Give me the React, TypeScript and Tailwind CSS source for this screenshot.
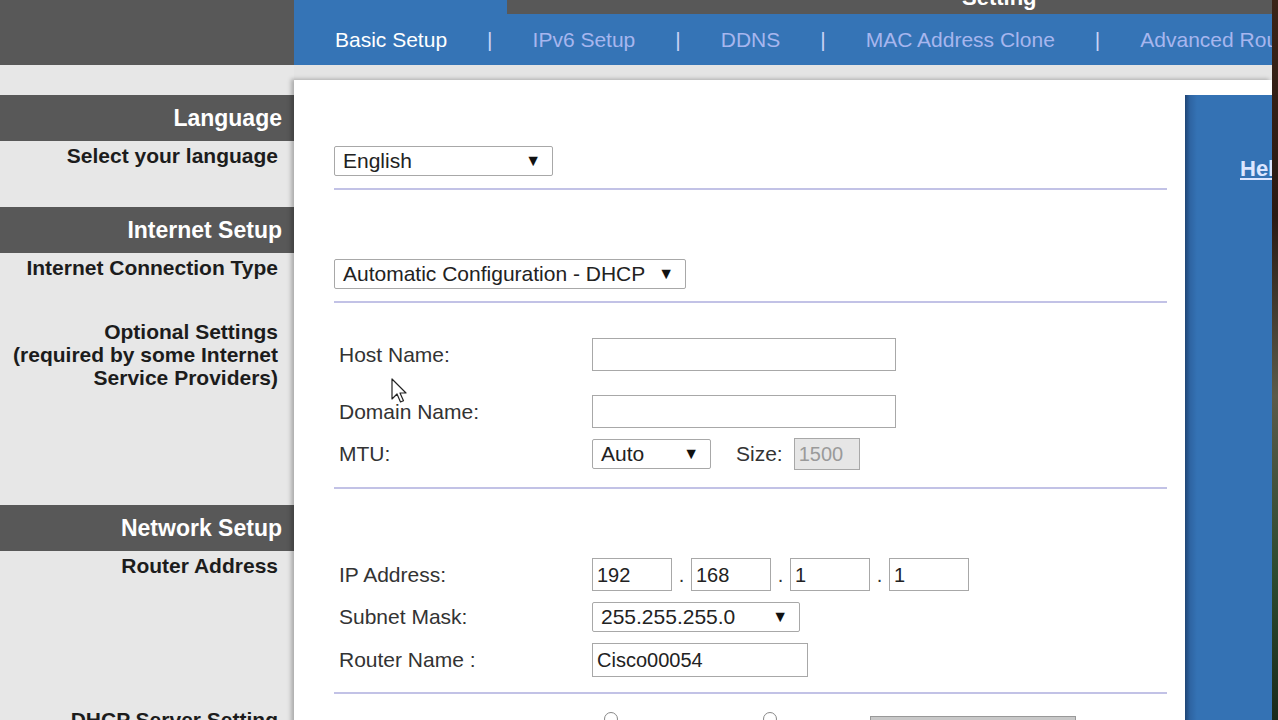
import React from "react";

const navItems = ["Basic Setup", "IPv6 Setup", "DDNS", "MAC Address Clone", "Advanced Routing"];

function FakeSelect({ value, width }: { value: string; width: string }) {
    return (
        <div className={`${width} h-[30px] flex items-center justify-between pl-[8px] pr-[11px] border border-[#a8a8a8] rounded-[2px] bg-white text-[21px] text-[#222]`}>
            <span>{value}</span>
            <span className="text-[16px] text-[#111]">▼</span>
        </div>
    );
}

function TextBox({ value = "", width, height = "h-[33px]", disabled = false }: { value?: string; width: string; height?: string; disabled?: boolean }) {
    return (
        <div className={`${width} ${height} flex items-center pl-[4px] border border-[#a8a8a8] text-[20px] ${disabled ? "bg-[#e6e6e6] text-[#9a9a9a]" : "bg-white text-[#222]"}`}>
            {value}
        </div>
    );
}

function Row({ label, children, className }: { label: string; children: React.ReactNode; className: string }) {
    return (
        <div className={`flex items-center ${className}`}>
            <div className="w-[258px] pl-[5px] text-[21px] text-[#333]">{label}</div>
            {children}
        </div>
    );
}

function SideHeader({ title }: { title: string }) {
    return (
        <div className="h-[46px] bg-[#585858] flex items-center justify-end pr-[12px] text-[23px] font-bold text-white">
            {title}
        </div>
    );
}

function Divider({ className }: { className: string }) {
    return <div className={`h-[2px] bg-[#c2c2e6] ${className}`} />;
}

export default function App() {
    return (
        <div className="w-[1278px] h-[720px] overflow-hidden flex font-['Liberation_Sans',Arial,sans-serif] relative">
            <div className="w-[1272px] shrink-0 flex flex-col">
                {/* top bar */}
                <div className="h-[65px] flex shrink-0">
                    <div className="w-[294px] shrink-0 bg-[#585858]" />
                    <div className="flex-1 min-w-0 bg-[#3574b6] flex flex-col">
                        <div className="ml-[213px] h-[14px] bg-[#585858] overflow-hidden pl-[455px]">
                            <div className="text-[22px] font-bold text-white leading-none -mt-[13px]">Setting</div>
                        </div>
                        <div className="flex-1 flex items-center pl-[41px] gap-[40px] text-[21px] whitespace-nowrap overflow-hidden">
                            {navItems.map((item, i) => (
                                <React.Fragment key={item}>
                                    {i > 0 && <span className="text-[#c9d3f5]">|</span>}
                                    <span className={i === 0 ? "text-white" : "text-[#a7b6ee]"}>{item}</span>
                                </React.Fragment>
                            ))}
                        </div>
                    </div>
                </div>

                <div className="flex-1 flex bg-[#e7e7e7]">
                    {/* sidebar */}
                    <div className="w-[294px] shrink-0 pt-[30px] flex flex-col text-[#1c1c1c] font-bold">
                        <SideHeader title="Language" />
                        <div className="h-[66px] pr-[16px] text-right text-[21px] leading-[23px] pt-[3px]">Select your language</div>
                        <SideHeader title="Internet Setup" />
                        <div className="h-[252px] pt-[3px] pr-[16px] text-right text-[21px] leading-[23px]">
                            <div>Internet Connection Type</div>
                            <div className="mt-[41px]">Optional Settings</div>
                            <div>(required by some Internet</div>
                            <div>Service Providers)</div>
                        </div>
                        <SideHeader title="Network Setup" />
                        <div className="pt-[3px] pr-[16px] text-right text-[21px] leading-[23px]">
                            <div>Router Address</div>
                            <div className="mt-[131px]">DHCP Server Setting</div>
                        </div>
                    </div>

                    {/* main area */}
                    <div className="flex-1 flex flex-col">
                        <div className="h-[15px] bg-[#e4e4e4]" />
                        <div className="flex-1 flex bg-white shadow-[-3px_-1px_4px_rgba(0,0,0,0.25)]">
                            <div className="w-[891px] pl-[40px] pr-[18px] flex flex-col">
                                <div className="mt-[66px]">
                                    <FakeSelect value="English" width="w-[219px]" />
                                </div>
                                <Divider className="mt-[12px]" />
                                <div className="mt-[69px]">
                                    <FakeSelect value="Automatic Configuration - DHCP" width="w-[352px]" />
                                </div>
                                <Divider className="mt-[12px]" />

                                <Row label="Host Name:" className="mt-[35px] h-[33px]">
                                    <TextBox width="w-[304px]" />
                                </Row>
                                <Row label="Domain Name:" className="mt-[24px] h-[33px]">
                                    <TextBox width="w-[304px]" />
                                </Row>
                                <Row label="MTU:" className="mt-[10px] h-[32px]">
                                    <FakeSelect value="Auto" width="w-[119px]" />
                                    <span className="ml-[25px] mr-[11px] text-[21px] text-[#333]">Size:</span>
                                    <TextBox value="1500" width="w-[66px]" height="h-[32px]" disabled />
                                </Row>
                                <Divider className="mt-[17px]" />

                                <Row label="IP Address:" className="mt-[69px] h-[33px]">
                                    {["192", "168", "1", "1"].map((v, i) => (
                                        <React.Fragment key={i}>
                                            {i > 0 && <span className="w-[19px] text-center text-[20px] text-[#333]">.</span>}
                                            <TextBox value={v} width="w-[80px]" />
                                        </React.Fragment>
                                    ))}
                                </Row>
                                <Row label="Subnet Mask:" className="mt-[11px] h-[30px]">
                                    <FakeSelect value="255.255.255.0" width="w-[208px]" />
                                </Row>
                                <Row label="Router Name :" className="mt-[11px] h-[34px]">
                                    <TextBox value="Cisco00054" width="w-[216px]" height="h-[34px]" />
                                </Row>
                                <Divider className="mt-[15px]" />

                                <div className="mt-[18px] flex items-start pl-[270px]">
                                    <div className="w-[14px] h-[14px] rounded-full border border-[#888]" />
                                    <div className="ml-[145px] w-[14px] h-[14px] rounded-full border border-[#888]" />
                                    <div className="ml-[93px] mt-[4px] w-[206px] h-[20px] bg-[#c8c8c8] border border-[#999]" />
                                </div>
                            </div>

                            {/* help panel */}
                            <div className="w-[87px] pt-[15px] flex flex-col">
                                <div className="flex-1 bg-[#3472b4] bg-[linear-gradient(to_right,#1f4575_0px,#2e64a2_5px,#3472b4_12px)] overflow-hidden pl-[55px] pt-[57px]">
                                    <span className="text-[22px] font-bold text-[#dce6ff] underline whitespace-nowrap">Help...</span>
                                </div>
                            </div>
                        </div>
                    </div>
                </div>
            </div>
            <div className="w-[6px] shrink-0 bg-[linear-gradient(to_bottom,#3b2418_0%,#2a1a14_30%,#5a5a4a_55%,#2c4a30_80%,#1a2a1c_100%)]" />

            {/* mouse cursor */}
            <svg className="absolute left-[391px] top-[378px]" width="16" height="26" viewBox="0 0 16 26">
                <path d="M1 1 L1 21 L6 16 L9.5 24 L12.5 22.7 L9 15 L15 15 Z" fill="white" stroke="#222" strokeWidth="1.2" strokeLinejoin="round" />
            </svg>
        </div>
    );
}
